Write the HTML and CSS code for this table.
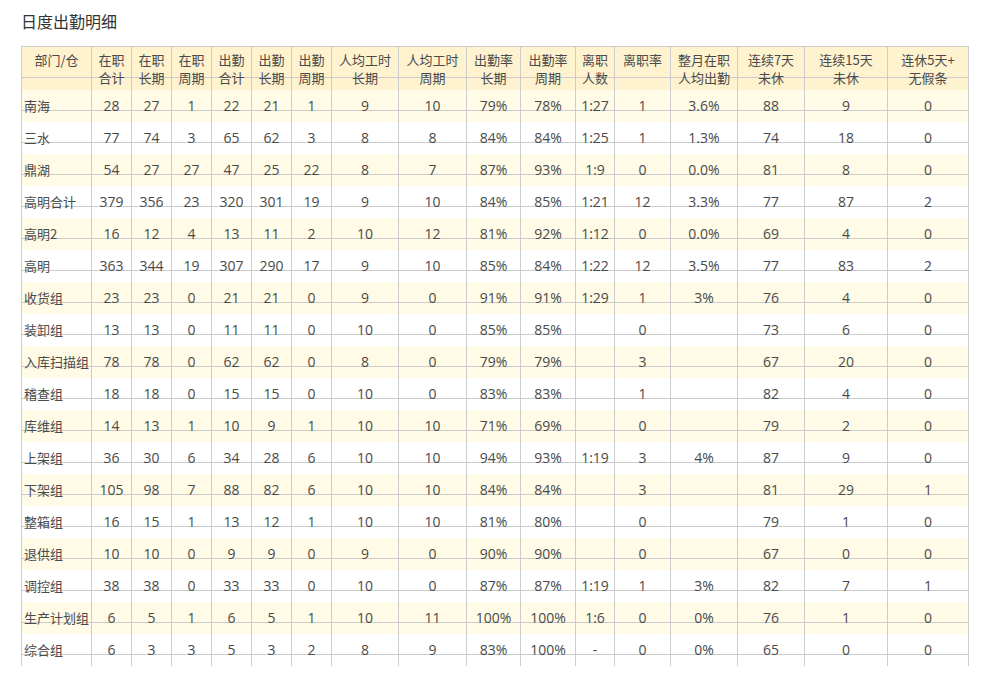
FILE: index.html
```html
<!DOCTYPE html>
<html lang="zh-CN">
<head>
<meta charset="utf-8">
<title>日度出勤明细</title>
<link rel="stylesheet" href="styles.css">
</head>
<body>
<div class="page">
  <h1 class="title">日度出勤明细</h1>
  <div class="sheet" role="table">
    <div class="row head" role="row">
      <div class="cell">部门/仓</div>
      <div class="cell">在职<br>合计</div>
      <div class="cell">在职<br>长期</div>
      <div class="cell">在职<br>周期</div>
      <div class="cell">出勤<br>合计</div>
      <div class="cell">出勤<br>长期</div>
      <div class="cell">出勤<br>周期</div>
      <div class="cell">人均工时<br>长期</div>
      <div class="cell">人均工时<br>周期</div>
      <div class="cell">出勤率<br>长期</div>
      <div class="cell">出勤率<br>周期</div>
      <div class="cell">离职<br>人数</div>
      <div class="cell">离职率</div>
      <div class="cell">整月在职<br>人均出勤</div>
      <div class="cell">连续7天<br>未休</div>
      <div class="cell">连续15天<br>未休</div>
      <div class="cell">连休5天+<br>无假条</div>
    </div>
    <div class="row band"><div class="cell name">南海</div><div class="cell">28</div><div class="cell">27</div><div class="cell">1</div><div class="cell">22</div><div class="cell">21</div><div class="cell">1</div><div class="cell">9</div><div class="cell">10</div><div class="cell">79%</div><div class="cell">78%</div><div class="cell">1:27</div><div class="cell">1</div><div class="cell">3.6%</div><div class="cell">88</div><div class="cell">9</div><div class="cell">0</div></div>
    <div class="row"><div class="cell name">三水</div><div class="cell">77</div><div class="cell">74</div><div class="cell">3</div><div class="cell">65</div><div class="cell">62</div><div class="cell">3</div><div class="cell">8</div><div class="cell">8</div><div class="cell">84%</div><div class="cell">84%</div><div class="cell">1:25</div><div class="cell">1</div><div class="cell">1.3%</div><div class="cell">74</div><div class="cell">18</div><div class="cell">0</div></div>
    <div class="row band"><div class="cell name">鼎湖</div><div class="cell">54</div><div class="cell">27</div><div class="cell">27</div><div class="cell">47</div><div class="cell">25</div><div class="cell">22</div><div class="cell">8</div><div class="cell">7</div><div class="cell">87%</div><div class="cell">93%</div><div class="cell">1:9</div><div class="cell">0</div><div class="cell">0.0%</div><div class="cell">81</div><div class="cell">8</div><div class="cell">0</div></div>
    <div class="row"><div class="cell name">高明合计</div><div class="cell">379</div><div class="cell">356</div><div class="cell">23</div><div class="cell">320</div><div class="cell">301</div><div class="cell">19</div><div class="cell">9</div><div class="cell">10</div><div class="cell">84%</div><div class="cell">85%</div><div class="cell">1:21</div><div class="cell">12</div><div class="cell">3.3%</div><div class="cell">77</div><div class="cell">87</div><div class="cell">2</div></div>
    <div class="row band"><div class="cell name">高明2</div><div class="cell">16</div><div class="cell">12</div><div class="cell">4</div><div class="cell">13</div><div class="cell">11</div><div class="cell">2</div><div class="cell">10</div><div class="cell">12</div><div class="cell">81%</div><div class="cell">92%</div><div class="cell">1:12</div><div class="cell">0</div><div class="cell">0.0%</div><div class="cell">69</div><div class="cell">4</div><div class="cell">0</div></div>
    <div class="row"><div class="cell name">高明</div><div class="cell">363</div><div class="cell">344</div><div class="cell">19</div><div class="cell">307</div><div class="cell">290</div><div class="cell">17</div><div class="cell">9</div><div class="cell">10</div><div class="cell">85%</div><div class="cell">84%</div><div class="cell">1:22</div><div class="cell">12</div><div class="cell">3.5%</div><div class="cell">77</div><div class="cell">83</div><div class="cell">2</div></div>
    <div class="row band"><div class="cell name">收货组</div><div class="cell">23</div><div class="cell">23</div><div class="cell">0</div><div class="cell">21</div><div class="cell">21</div><div class="cell">0</div><div class="cell">9</div><div class="cell">0</div><div class="cell">91%</div><div class="cell">91%</div><div class="cell">1:29</div><div class="cell">1</div><div class="cell">3%</div><div class="cell">76</div><div class="cell">4</div><div class="cell">0</div></div>
    <div class="row"><div class="cell name">装卸组</div><div class="cell">13</div><div class="cell">13</div><div class="cell">0</div><div class="cell">11</div><div class="cell">11</div><div class="cell">0</div><div class="cell">10</div><div class="cell">0</div><div class="cell">85%</div><div class="cell">85%</div><div class="cell"></div><div class="cell">0</div><div class="cell"></div><div class="cell">73</div><div class="cell">6</div><div class="cell">0</div></div>
    <div class="row band"><div class="cell name">入库扫描组</div><div class="cell">78</div><div class="cell">78</div><div class="cell">0</div><div class="cell">62</div><div class="cell">62</div><div class="cell">0</div><div class="cell">8</div><div class="cell">0</div><div class="cell">79%</div><div class="cell">79%</div><div class="cell"></div><div class="cell">3</div><div class="cell"></div><div class="cell">67</div><div class="cell">20</div><div class="cell">0</div></div>
    <div class="row"><div class="cell name">稽查组</div><div class="cell">18</div><div class="cell">18</div><div class="cell">0</div><div class="cell">15</div><div class="cell">15</div><div class="cell">0</div><div class="cell">10</div><div class="cell">0</div><div class="cell">83%</div><div class="cell">83%</div><div class="cell"></div><div class="cell">1</div><div class="cell"></div><div class="cell">82</div><div class="cell">4</div><div class="cell">0</div></div>
    <div class="row band"><div class="cell name">库维组</div><div class="cell">14</div><div class="cell">13</div><div class="cell">1</div><div class="cell">10</div><div class="cell">9</div><div class="cell">1</div><div class="cell">10</div><div class="cell">10</div><div class="cell">71%</div><div class="cell">69%</div><div class="cell"></div><div class="cell">0</div><div class="cell"></div><div class="cell">79</div><div class="cell">2</div><div class="cell">0</div></div>
    <div class="row"><div class="cell name">上架组</div><div class="cell">36</div><div class="cell">30</div><div class="cell">6</div><div class="cell">34</div><div class="cell">28</div><div class="cell">6</div><div class="cell">10</div><div class="cell">10</div><div class="cell">94%</div><div class="cell">93%</div><div class="cell">1:19</div><div class="cell">3</div><div class="cell">4%</div><div class="cell">87</div><div class="cell">9</div><div class="cell">0</div></div>
    <div class="row band"><div class="cell name">下架组</div><div class="cell">105</div><div class="cell">98</div><div class="cell">7</div><div class="cell">88</div><div class="cell">82</div><div class="cell">6</div><div class="cell">10</div><div class="cell">10</div><div class="cell">84%</div><div class="cell">84%</div><div class="cell"></div><div class="cell">3</div><div class="cell"></div><div class="cell">81</div><div class="cell">29</div><div class="cell">1</div></div>
    <div class="row"><div class="cell name">整箱组</div><div class="cell">16</div><div class="cell">15</div><div class="cell">1</div><div class="cell">13</div><div class="cell">12</div><div class="cell">1</div><div class="cell">10</div><div class="cell">10</div><div class="cell">81%</div><div class="cell">80%</div><div class="cell"></div><div class="cell">0</div><div class="cell"></div><div class="cell">79</div><div class="cell">1</div><div class="cell">0</div></div>
    <div class="row band"><div class="cell name">退供组</div><div class="cell">10</div><div class="cell">10</div><div class="cell">0</div><div class="cell">9</div><div class="cell">9</div><div class="cell">0</div><div class="cell">9</div><div class="cell">0</div><div class="cell">90%</div><div class="cell">90%</div><div class="cell"></div><div class="cell">0</div><div class="cell"></div><div class="cell">67</div><div class="cell">0</div><div class="cell">0</div></div>
    <div class="row"><div class="cell name">调控组</div><div class="cell">38</div><div class="cell">38</div><div class="cell">0</div><div class="cell">33</div><div class="cell">33</div><div class="cell">0</div><div class="cell">10</div><div class="cell">0</div><div class="cell">87%</div><div class="cell">87%</div><div class="cell">1:19</div><div class="cell">1</div><div class="cell">3%</div><div class="cell">82</div><div class="cell">7</div><div class="cell">1</div></div>
    <div class="row band"><div class="cell name">生产计划组</div><div class="cell">6</div><div class="cell">5</div><div class="cell">1</div><div class="cell">6</div><div class="cell">5</div><div class="cell">1</div><div class="cell">10</div><div class="cell">11</div><div class="cell">100%</div><div class="cell">100%</div><div class="cell">1:6</div><div class="cell">0</div><div class="cell">0%</div><div class="cell">76</div><div class="cell">1</div><div class="cell">0</div></div>
    <div class="row"><div class="cell name">综合组</div><div class="cell">6</div><div class="cell">3</div><div class="cell">3</div><div class="cell">5</div><div class="cell">3</div><div class="cell">2</div><div class="cell">8</div><div class="cell">9</div><div class="cell">83%</div><div class="cell">100%</div><div class="cell">-</div><div class="cell">0</div><div class="cell">0%</div><div class="cell">65</div><div class="cell">0</div><div class="cell">0</div></div>
  </div>
</div>
</body>
</html>
```

FILE: styles.css
```css
html, body {
  margin: 0;
  padding: 0;
  background: #ffffff;
}

.page {
  padding: 10px 0 0 21px;
  font-family: "Open Sans", "Noto Sans CJK SC", sans-serif;
  color: #4a4a4a;
}

.title {
  margin: 0 0 13px 0;
  font-family: "Noto Sans CJK SC", sans-serif;
  font-size: 16px;
  line-height: 23px;
  font-weight: normal;
  color: #333333;
}

.sheet {
  width: 948px;
  border-top: 1px solid #cccccc;
}

.row {
  display: grid;
  grid-template-columns: 70px 40px 40px 40px 40px 40px 40px 67px 68px 54px 55px 39px 56px 67px 67px 83px 82px;
  height: 32px;
  background-color: #ffffff;
  background-image: linear-gradient(to bottom, transparent 20px, #cccccc 20px, #cccccc 21px, transparent 21px);
}

.row.band {
  background-color: #fffbe7;
}

.row.head {
  height: 43px;
  background-color: #fef2cf;
  background-image: linear-gradient(to bottom, transparent 30px, #cccccc 30px, #cccccc 31px, transparent 31px);
}

.cell {
  box-sizing: border-box;
  border-left: 1px solid #cccccc;
  text-align: center;
  font-size: 14px;
  line-height: 32px;
  white-space: nowrap;
  overflow: hidden;
}

.cell:last-child {
  border-right: 1px solid #cccccc;
}

.head .cell {
  font-family: "Noto Sans CJK SC", sans-serif;
  font-size: 13px;
  line-height: 18px;
  padding-top: 4px;
}

.cell.name {
  font-family: "Noto Sans CJK SC", sans-serif;
  font-size: 13px;
  text-align: left;
  padding-left: 2px;
}
```
